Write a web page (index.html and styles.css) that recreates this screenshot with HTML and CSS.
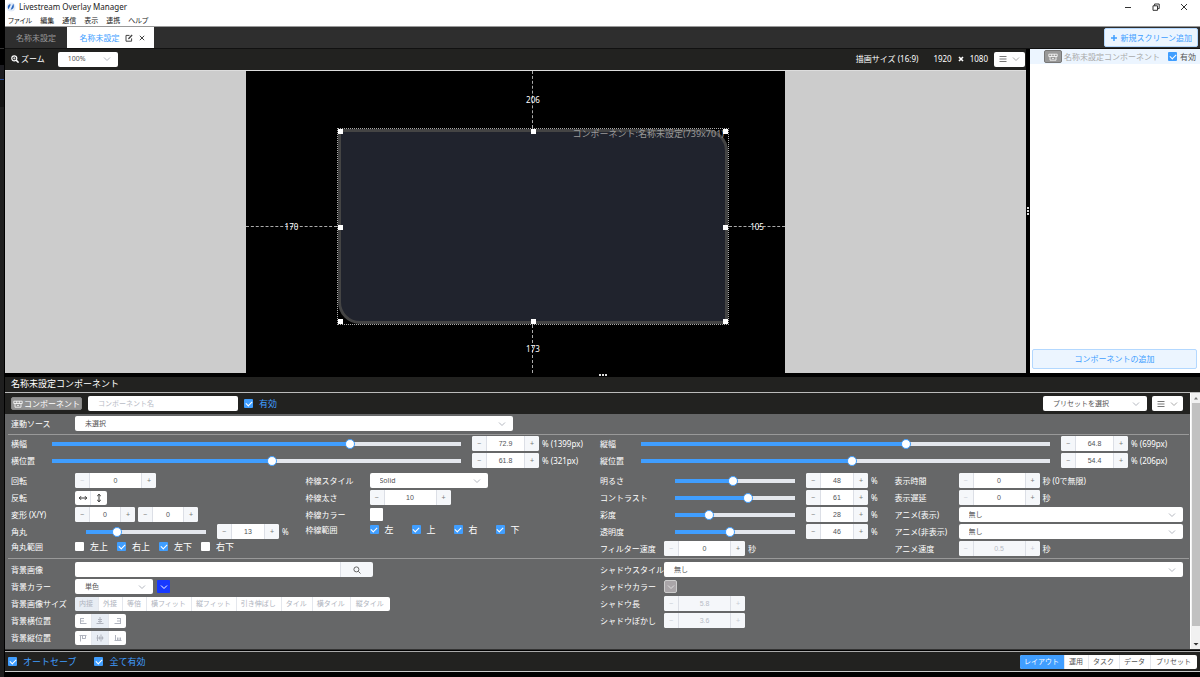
FILE: index.html
```html
<!DOCTYPE html>
<html lang="ja">
<head>
<meta charset="utf-8">
<title>Livestream Overlay Manager</title>
<link rel="stylesheet" href="styles.css">
</head>
<body>
<svg class="defs" aria-hidden="true">
  <symbol id="chev" viewBox="0 0 8 8"><path d="M1 2.5 4 5.5 7 2.5" fill="none" stroke="currentColor"/></symbol>
  <symbol id="bars" viewBox="0 0 8 8"><path d="M.5 1.5h7M.5 4h7M.5 6.5h7" fill="none" stroke="currentColor"/></symbol>
  <symbol id="box" viewBox="0 0 10 8"><path d="M.8 1.2h8.4v2.3H.8zM2 3.5v3.7h6V3.5M3.7 1.2v2.3M6.3 1.2v2.3M4 5.4h2" fill="none" stroke="currentColor" stroke-width=".8"/></symbol>
</svg>
<div class="edge"></div>
<div class="app">
  <header class="titlebar">
    <svg class="logo" viewBox="0 0 10 10"><circle cx="5" cy="5" r="4.6" fill="#e3ecf8"/><path d="M3.6 2.2C1.6 3.2 1.2 5.6 2.6 7.2L4.8 2.6zM7.2 1.8 4.6 7.8C7.4 7.6 8.8 4.4 7.2 1.8z" fill="#2a66c0"/></svg>
    <h1>Livestream Overlay Manager</h1>
    <div class="winbtns">
      <button aria-label="最小化"><svg viewBox="0 0 8 8"><path d="M1 4.5h6" stroke="#333" fill="none"/></svg></button>
      <button aria-label="元に戻す"><svg viewBox="0 0 8 8"><path d="M1 2.8h4.5v4.5H1zM2.6 2.8V1h4.6v4.6H5.5" stroke="#333" fill="none"/></svg></button>
      <button aria-label="閉じる"><svg viewBox="0 0 8 8"><path d="M1 1 7 7M7 1 1 7" stroke="#333" fill="none"/></svg></button>
    </div>
  </header>
  <nav class="menu"><a href="#">ファイル</a><a href="#">編集</a><a href="#">通信</a><a href="#">表示</a><a href="#">連携</a><a href="#">ヘルプ</a></nav>
  <div class="tabs">
    <button class="tab">名称未設定</button>
    <div class="tab active"><button>名称未設定</button>
      <button aria-label="編集"><svg class="ic" viewBox="0 0 8 8"><path d="M4.5 1.4H1v5.8h5.6V4.4" stroke="#444" fill="none"/><path d="M3 5.3 3.3 3.9 6.6.6l1 1-3.3 3.3z" fill="#444"/></svg></button>
      <button aria-label="閉じる"><svg class="ic" viewBox="0 0 8 8"><path d="M1.8 1.8 6.2 6.2M6.2 1.8 1.8 6.2" stroke="#444" fill="none"/></svg></button>
    </div>
    <button class="primary add-screen"><svg class="ic" viewBox="0 0 8 8"><path d="M4 1v6M1 4h6" stroke="currentColor" stroke-width="1.5"/></svg>新規スクリーン追加</button>
  </div>

  <main class="workspace">
    <section class="preview">
      <div class="bar">
        <svg class="ic" viewBox="0 0 8 8"><circle cx="3.3" cy="3.3" r="2.5" fill="none" stroke="#fff" stroke-width="1.2"/><path d="M5.1 5.1 7.6 7.6" stroke="#fff" stroke-width="1.5"/><path d="M2.1 3.3h2.4M3.3 2.1v2.4" stroke="#fff" stroke-width=".7"/></svg>
        <label for="zoom">ズーム</label>
        <div class="select zoom"><select id="zoom"><option>100%</option></select><svg><use href="#chev"/></svg></div>
        <span class="size">描画サイズ (16:9)</span><span>1920</span>
        <svg class="ic times" viewBox="0 0 8 8"><path d="M2 2 6 6M6 2 2 6" stroke="#fff" stroke-width="1.6"/></svg>
        <span>1080</span>
        <button class="more" aria-label="サイズメニュー"><svg><use href="#bars"/></svg><svg class="dim"><use href="#chev"/></svg></button>
      </div>
      <div class="viewport">
        <div class="stage">
          <div class="guide v top"><span>206</span></div>
          <div class="guide h left"><span>170</span></div>
          <div class="component"><div class="shape"></div><span class="caption">コンポーネント:名称未設定(739x701)</span>
            <i class="hd nw"></i><i class="hd n"></i><i class="hd ne"></i><i class="hd w"></i><i class="hd e"></i><i class="hd sw"></i><i class="hd s"></i><i class="hd se"></i></div>
          <div class="guide h right"><span>105</span></div>
          <div class="guide v bottom"><span>173</span></div>
        </div>
      </div>
    </section>
    <div class="split-v"><i></i><i></i><i></i></div>
    <aside class="list">
      <div class="item"><span class="tag"><svg><use href="#box"/></svg></span><span class="name">名称未設定コンポーネント</span><label><input type="checkbox" checked>有効</label></div>
      <button class="primary add-comp">コンポーネントの追加</button>
    </aside>
  </main>
  <div class="split-h"><i></i><i></i><i></i></div>

  <section class="props">
    <h2>名称未設定コンポーネント</h2>
    <div class="scroller">
      <div class="content">
        <div class="bar tools">
          <span class="tag"><svg><use href="#box"/></svg>コンポーネント</span>
          <input class="text cname" type="text" placeholder="コンポーネント名" aria-label="コンポーネント名">
          <label class="blue"><input type="checkbox" checked>有効</label>
          <div class="select preset"><select aria-label="プリセット"><option>プリセットを選択</option></select><svg><use href="#chev"/></svg></div>
          <button class="more" aria-label="メニュー"><svg><use href="#bars"/></svg><svg class="dim"><use href="#chev"/></svg></button>
        </div>
        <form class="form">
          <div class="group source">
            <div class="row"><label class="lb" for="src">連動ソース</label><div class="select src"><select id="src"><option>未選択</option></select><svg><use href="#chev"/></svg></div></div>
          </div>
          <div class="group sizes">
            <div class="col">
              <div class="row"><label class="lb short" for="w">横幅</label><input class="long" type="range" step="0.1" value="72.9" style="--v:72.9%" aria-label="横幅"><div class="step s66"><button type="button">−</button><input id="w" value="72.9"><button type="button">+</button></div><span>% (1399px)</span></div>
              <div class="row"><label class="lb short" for="x">横位置</label><input class="long" type="range" step="0.1" value="53.8" style="--v:53.8%" aria-label="横位置"><div class="step s66"><button type="button">−</button><input id="x" value="61.8"><button type="button">+</button></div><span>% (321px)</span></div>
            </div>
            <div class="col">
              <div class="row"><label class="lb short" for="h">縦幅</label><input class="long" type="range" step="0.1" value="64.8" style="--v:64.8%" aria-label="縦幅"><div class="step s66"><button type="button">−</button><input id="h" value="64.8"><button type="button">+</button></div><span>% (699px)</span></div>
              <div class="row"><label class="lb short" for="y">縦位置</label><input class="long" type="range" step="0.1" value="51.5" style="--v:51.5%" aria-label="縦位置"><div class="step s66"><button type="button">−</button><input id="y" value="54.4"><button type="button">+</button></div><span>% (206px)</span></div>
            </div>
          </div>
          <div class="group quad">
            <div class="col">
              <div class="row"><label class="lb" for="rot">回転</label><div class="step s81"><button type="button" disabled>−</button><input id="rot" value="0"><button type="button">+</button></div></div>
              <div class="row"><span class="lb">反転</span><div class="btns flip"><button type="button" aria-label="左右反転"><svg viewBox="0 0 8 8"><path d="M0 4h8M2 2.2.3 4 2 5.8M6 2.2 7.7 4 6 5.8" fill="none" stroke="#333"/></svg></button><button type="button" aria-label="上下反転"><svg viewBox="0 0 8 8"><path d="M4 0v8M2.2 2 4 .3 5.8 2M2.2 6 4 7.7 5.8 6" fill="none" stroke="#333"/></svg></button></div></div>
              <div class="row"><label class="lb" for="sx">変形 (X/Y)</label><div class="step s60"><button type="button">−</button><input id="sx" value="0"><button type="button">+</button></div><div class="step s60"><button type="button">−</button><input aria-label="変形 Y" value="0"><button type="button">+</button></div></div>
              <div class="row"><label class="lb" for="rad">角丸</label><input class="mid" type="range" value="26" style="--v:26%" aria-label="角丸"><div class="step s62"><button type="button">−</button><input id="rad" value="13"><button type="button">+</button></div><span>%</span></div>
              <div class="row tight"><span class="lb">角丸範囲</span><div class="checks"><label><input type="checkbox">左上</label><label><input type="checkbox" checked>右上</label><label><input type="checkbox" checked>左下</label><label><input type="checkbox">右下</label></div></div>
            </div>
            <div class="col">
              <div class="row"><label class="lb" for="bs">枠線スタイル</label><div class="select s118"><select id="bs"><option>Solid</option></select><svg><use href="#chev"/></svg></div></div>
              <div class="row"><label class="lb" for="bw">枠線太さ</label><div class="step s81"><button type="button">−</button><input id="bw" value="10"><button type="button">+</button></div></div>
              <div class="row"><span class="lb">枠線カラー</span><button type="button" class="swatch white" aria-label="枠線カラー"></button></div>
              <div class="row tight"><span class="lb">枠線範囲</span><div class="checks"><label><input type="checkbox" checked>左</label><label><input type="checkbox" checked>上</label><label><input type="checkbox" checked>右</label><label><input type="checkbox" checked>下</label></div></div>
            </div>
            <div class="col">
              <div class="row"><label class="lb" for="br">明るさ</label><input class="mid" type="range" value="48" style="--v:48%" aria-label="明るさ"><div class="step s62"><button type="button">−</button><input id="br" value="48"><button type="button">+</button></div><span>%</span></div>
              <div class="row"><label class="lb" for="co">コントラスト</label><input class="mid" type="range" value="61" style="--v:61%" aria-label="コントラスト"><div class="step s62"><button type="button">−</button><input id="co" value="61"><button type="button">+</button></div><span>%</span></div>
              <div class="row"><label class="lb" for="sa">彩度</label><input class="mid" type="range" value="28" style="--v:28%" aria-label="彩度"><div class="step s62"><button type="button">−</button><input id="sa" value="28"><button type="button">+</button></div><span>%</span></div>
              <div class="row"><label class="lb" for="op">透明度</label><input class="mid" type="range" value="46" style="--v:46%" aria-label="透明度"><div class="step s62"><button type="button">−</button><input id="op" value="46"><button type="button">+</button></div><span>%</span></div>
              <div class="row"><label class="lb" for="fs">フィルター速度</label><div class="step s81"><button type="button" disabled>−</button><input id="fs" value="0"><button type="button">+</button></div><span>秒</span></div>
            </div>
            <div class="col">
              <div class="row"><label class="lb" for="dt">表示時間</label><div class="step s81"><button type="button" disabled>−</button><input id="dt" value="0"><button type="button">+</button></div><span>秒 (0で無限)</span></div>
              <div class="row"><label class="lb" for="dd">表示遅延</label><div class="step s81"><button type="button" disabled>−</button><input id="dd" value="0"><button type="button">+</button></div><span>秒</span></div>
              <div class="row"><label class="lb" for="a1">アニメ(表示)</label><div class="select fill"><select id="a1"><option>無し</option></select><svg><use href="#chev"/></svg></div></div>
              <div class="row"><label class="lb" for="a2">アニメ(非表示)</label><div class="select fill"><select id="a2"><option>無し</option></select><svg><use href="#chev"/></svg></div></div>
              <div class="row"><label class="lb" for="as">アニメ速度</label><div class="step s81"><button type="button" disabled>−</button><input id="as" value="0.5" disabled><button type="button" disabled>+</button></div><span>秒</span></div>
            </div>
          </div>
          <div class="group last">
            <div class="col">
              <div class="row"><label class="lb" for="bg">背景画像</label><div class="file"><input id="bg" class="text" type="text"><button type="button" aria-label="参照"><svg viewBox="0 0 8 8"><circle cx="3.4" cy="3.4" r="2.5" fill="none" stroke="#666"/><path d="M5.3 5.3 7.5 7.5" stroke="#666"/></svg></button></div></div>
              <div class="row"><label class="lb" for="bc">背景カラー</label><div class="select s77"><select id="bc"><option>単色</option></select><svg><use href="#chev"/></svg></div><button type="button" class="swatch blue-sw" aria-label="背景カラー"><svg><use href="#chev"/></svg></button></div>
              <div class="row"><span class="lb">背景画像サイズ</span><div class="btns off"><button type="button" class="on" disabled>内接</button><button type="button" disabled>外接</button><button type="button" disabled>等倍</button><button type="button" disabled>横フィット</button><button type="button" disabled>縦フィット</button><button type="button" disabled>引き伸ばし</button><button type="button" disabled>タイル</button><button type="button" disabled>横タイル</button><button type="button" disabled>縦タイル</button></div></div>
              <div class="row"><span class="lb">背景横位置</span><div class="btns off icons">
                <button type="button" disabled aria-label="左"><svg viewBox="0 0 8 8"><path d="M1.5 1v6M1.5 1.5H5M1.5 4H5M1.5 6.5H7.5" fill="none" stroke="currentColor"/></svg></button><button type="button" class="on" disabled aria-label="中央"><svg viewBox="0 0 8 8"><path d="M4 0v7M2 2.5h4M2 4.5h4M.5 6.5h7" fill="none" stroke="currentColor"/></svg></button><button type="button" disabled aria-label="右"><svg viewBox="0 0 8 8"><path d="M6.5 1v6M6.5 1.5H3M6.5 4H3M6.5 6.5H.5" fill="none" stroke="currentColor"/></svg></button></div></div>
              <div class="row"><span class="lb">背景縦位置</span><div class="btns off icons">
                <button type="button" disabled aria-label="上"><svg viewBox="0 0 8 8"><path d="M.5 1.5h7M1.5 1.5v6M3.5 1.5V5M3.5 4.5h3v-3" fill="none" stroke="currentColor"/></svg></button><button type="button" class="on" disabled aria-label="中央"><svg viewBox="0 0 8 8"><path d="M.5 4h7M1.5 1v6M3.5 2.5v3M5 .5v7M6.5 2.5v3" fill="none" stroke="currentColor"/></svg></button><button type="button" disabled aria-label="下"><svg viewBox="0 0 8 8"><path d="M.5 6.5h7M1.5 6.5V1M3.5 6.5v-3M5 6.5v-3M6.5 6.5v-3" fill="none" stroke="currentColor"/></svg></button></div></div>
            </div>
            <div class="col">
              <div class="row"><label class="lb" for="ss">シャドウスタイル</label><div class="select fill"><select id="ss"><option>無し</option></select><svg><use href="#chev"/></svg></div></div>
              <div class="row"><span class="lb">シャドウカラー</span><button type="button" class="swatch grey" disabled aria-label="シャドウカラー"><svg><use href="#chev"/></svg></button></div>
              <div class="row"><label class="lb" for="sl">シャドウ長</label><div class="step s81"><button type="button" disabled>−</button><input id="sl" value="5.8" disabled><button type="button" disabled>+</button></div></div>
              <div class="row"><label class="lb" for="sb">シャドウぼかし</label><div class="step s81"><button type="button" disabled>−</button><input id="sb" value="3.6" disabled><button type="button" disabled>+</button></div></div>
            </div>
          </div>
        </form>
      </div>
      <div class="scrollbar" aria-hidden="true"><svg viewBox="0 0 8 8"><path d="M2 5.5h4L4 3z" fill="#777"/></svg><div class="thumb"></div><svg viewBox="0 0 8 8"><path d="M1.5 3h5L4 5.5z" fill="#333"/></svg></div>
    </div>
  </section>
  <footer class="status">
    <label class="blue"><input type="checkbox" checked>オートセーブ</label>
    <label class="blue"><input type="checkbox" checked>全て有効</label>
    <div class="btns modes"><button class="sel">レイアウト</button><button>運用</button><button>タスク</button><button>データ</button><button>プリセット</button></div>
  </footer>
</div>
</body>
</html>
```
FILE: styles.css
```css
* { box-sizing: border-box; }
body {
  margin: 0; display: flex; height: 100vh; overflow: hidden; background: #000; color: #fff;
  font: 8px/10px "Noto Sans", "Noto Sans CJK JP", sans-serif; white-space: nowrap;
}
button, input, select { font: inherit; color: inherit; margin: 0; padding: 0; border: 0; background: none; min-width: 0; }
button { display: flex; align-items: center; justify-content: center; }
h1, h2 { margin: 0; font: inherit; }
a { color: inherit; text-decoration: none; }
svg { width: 8px; height: 8px; flex: none; display: block; }
.defs { position: absolute; width: 0; height: 0; }
.edge { flex: 0 0 5px; background: linear-gradient(#000 48px, #333 48px 49px, #000 49px 65px, #1c1c20 65px 79px, #2b4a90 79px 80px, #141414 80px 107px, #1f1f1f 107px); border-right: 1px solid #000; }
.app { flex: 1; min-width: 0; display: flex; flex-direction: column; padding-bottom: 5px; }

.titlebar { height: 14px; background: #fff; color: #222; display: flex; align-items: center; padding: 0 12px 0 1px; gap: 3px; }
.logo { width: 10px; height: 10px; }
.winbtns { margin-left: auto; display: flex; gap: 20px; }
.menu { height: 13px; background: #fff; color: #222; display: flex; align-items: center; gap: 8px; padding: 1px 0 0 3px; border-bottom: 1px solid #999; font-size: 7px; }
.menu a { font-feature-settings: "palt"; }
.tabs { height: 22px; background: #2e2e2e; display: flex; align-items: stretch; padding: 0 2px 0 0; border-bottom: 1px solid #111; }
.tab { width: 62px; color: #999; }
.tab.active { width: 87px; display: flex; align-items: center; justify-content: center; gap: 5px; background: #fff; color: #409eff; padding-left: 4px; }
.primary { background: #ecf5ff; color: #409eff; border: 1px solid #b3d8ff; border-radius: 2px; }
.add-screen { margin: 1px 0 1px auto; padding: 0 5px; gap: 2px; }

.workspace { flex: 1; min-height: 0; display: flex; }
.preview { flex: 1; display: flex; flex-direction: column; min-width: 0; }
.bar { height: 21px; flex: none; background: #222220; display: flex; align-items: center; padding: 0 1px 0 6px; }
.preview .bar { padding-bottom: 1px; }
.bar label { margin-left: 2px; }
.select { display: grid; align-items: center; height: 15px; color: #555; font-size: 7px; }
.select > * { grid-area: 1 / 1; }
.select select { appearance: none; width: 100%; height: 15px; background: #fff; border-radius: 2px; padding: 0 20px 0 10px; }
.select svg { justify-self: end; margin-right: 7px; color: #b4b8c0; pointer-events: none; }
.zoom { width: 60px; margin-left: 13px; }
.size { margin: 0 15px 0 auto; }
.times { margin: 0 5px; }
.more { width: 31px; height: 15px; margin-left: 6px; gap: 5px; background: #fff; border-radius: 2px; color: #777; }
.more .dim { color: #aaa; }
.viewport { flex: 1; min-height: 0; display: flex; justify-content: center; background: #ccc; border-top: 1px solid #ddd; }
.stage { width: 52.8%; background: #000; display: grid; grid-template-columns: 91fr 392fr 56fr; grid-template-rows: 57fr 197fr 48fr; }
.guide { display: grid; place-items: center; color: #fff; font-size: 8px; min-height: 0; min-width: 0; }
.guide::before { content: ""; grid-area: 1 / 1; }
.guide span { grid-area: 1 / 1; }
.guide.v::before { height: 100%; border-left: 1px dashed #aaa; }
.guide.h::before { width: 100%; border-top: 1px dashed #aaa; }
.top { grid-area: 1 / 2; }
.left { grid-area: 2 / 1; }
.right { grid-area: 2 / 3; }
.bottom { grid-area: 3 / 2; }
.component { grid-area: 2 / 2; position: relative; border: 1px dotted #aaa; }
.shape { height: 100%; background: #20232d; border: 3px solid #444; border-radius: 0 22px 0 22px; }
.caption { position: absolute; right: 4px; top: 0; color: #999; font-size: 9px; }
.hd { position: absolute; width: 5px; height: 5px; background: #fff; }
.nw, .n, .ne { top: 0; }
.sw, .s, .se { bottom: 0; }
.nw, .w, .sw { left: 0; }
.ne, .e, .se { right: 0; }
.w, .e { top: calc(50% - 2px); }
.n, .s { left: calc(50% - 2px); }
.split-v { width: 4px; background: #000; display: flex; flex-direction: column; align-items: center; justify-content: center; gap: 1px; }
.split-v i, .split-h i { width: 2px; height: 2px; background: #ddd; }
.split-h { height: 4px; flex: none; display: flex; align-items: center; justify-content: center; gap: 1px; }
.list { width: 170px; background: #fff; display: flex; flex-direction: column; justify-content: space-between; }
.item { height: 15px; background: #ecf5ff; display: flex; align-items: center; padding: 0 4px 0 14px; gap: 2px; }
.item .name { color: #aaa; }
.item label { margin-left: auto; display: flex; gap: 3px; align-items: center; color: #555; }
.tag { display: flex; align-items: center; justify-content: center; gap: 1px; height: 13px; padding: 0 3px; background: #999; border: 1px solid #777; border-radius: 2px; color: #fff; }
.tag svg { width: 10px; }
.add-comp { height: 20px; margin: 0 3px 4px 2px; }

.props { flex: none; display: flex; flex-direction: column; }
.props h2 { height: 16px; padding-left: 6px; background: #222220; border-bottom: 1px solid #bbb; font-size: 9px; line-height: 14px; }
.scroller { display: flex; border-bottom: 1px solid #333; }
.content { flex: 1; min-width: 0; }
.tools { padding-right: 7px; }
.tools .tag { border-color: #888; background: #929292; padding: 0 1px; }
.text { height: 15px; background: #fff; border-radius: 2px; padding: 0 10px; font-size: 7px; color: #555; }
.text::placeholder { color: #b8bcc6; }
.cname { width: 150px; margin-left: 6px; }
.blue { display: flex; align-items: center; gap: 6px; color: #409eff; font-size: 9px; }
.bar .blue { margin-left: 6px; }
.preset { width: 104px; margin-left: auto; }
.tools .more { margin-left: 5px; }
.form { background: #666768; padding: 0 1px 3px 3px; }
.group { display: grid; grid-template-columns: 1fr 1fr; padding-left: 3px; border-bottom: 1px solid #999; }
.source { padding-top: 1px; padding-bottom: 2px; }
.sizes { border: 0; padding-bottom: 3px; }
.quad { grid-template-columns: 1fr 1fr 1fr 1fr; padding-bottom: 1px; }
.last { border: 0; padding-top: 2px; }
.row { height: 17px; display: flex; align-items: center; }
.tight { height: 13px; }
.row > span:last-child { margin-left: 3px; }
.sizes .row > span:last-child { flex: 0 0 58px; }
.lb { flex: 0 0 64px; }
.lb.short { flex-basis: 41px; }
.src { width: 438px; }
.fill { flex: 1; margin-right: 6px; }
.s118 { width: 118px; }
.s77 { width: 78px; }
input[type="range"] {
  appearance: none; height: 15px;
  background: linear-gradient(90deg, #409eff var(--v), #e4e7ed var(--v)) center / calc(100% - 10px) 4px no-repeat;
}
.long { flex: 1; margin: 0 6px 0 -5px !important; }
.mid { width: 130px; margin: 0 6px !important; }
input[type="range"]::-webkit-slider-thumb { appearance: none; width: 10px; height: 10px; border-radius: 50%; background: #fff; border: 1px solid #409eff; }
.step { display: grid; grid-template-columns: 15px 1fr 15px; height: 15px; flex: none; background: #fff; border-radius: 2px; overflow: hidden; color: #505256; font: 7px/15px "Liberation Sans", sans-serif; }
.step input { text-align: center; width: 100%; }
.step button { background: #f5f7fa; color: #777; border-right: 1px solid #dcdfe6; }
.step button:last-child { border-right: 0; border-left: 1px solid #dcdfe6; }
.step button:disabled { color: #c8ccd4; }
.step input:disabled { background: #f5f7fa; color: #b8bcc6; }
.s60 { width: 60px; }
.s60 + .s60 { margin-left: 3px; }
.s62 { width: 62px; }
.s66 { width: 67px; }
.s81 { width: 81px; }
input[type="checkbox"] { appearance: none; width: 9px; height: 9px; background: #fff; border-radius: 1px; display: grid; place-items: center; flex: none; }
input[type="checkbox"]:checked { background: #409eff; }
input[type="checkbox"]:checked::after { content: ""; width: 3px; height: 5px; margin-bottom: 2px; border: solid #fff; border-width: 0 1px 1px 0; transform: rotate(45deg); }
.checks { display: flex; font-size: 9px; }
.checks label { width: 42px; display: flex; align-items: center; gap: 6px; }
.btns { display: flex; height: 14px; background: #fff; border-radius: 2px; overflow: hidden; color: #555; font-size: 7px; }
.btns button { padding: 0 5px 0 4px; border-right: 1px solid #e4e7ed; }
.btns button:last-child { border-right: 0; padding: 0 6px 0 5px; }
.btns.flip button { width: 16px; padding: 0; }
.off { color: #b0b4be; }
.off .on { background: #e8edf4; }
.btns.icons button { width: 17px; padding: 0; }
.swatch { width: 13px; height: 13px; border-radius: 1px; }
.white { background: #fff; }
.blue-sw { margin-left: 4px; background: #1739ff; color: #fff; }
.grey { background: #a9a5a8; border: 1px solid #ccc; color: #ddd; border-radius: 2px; }
.file { display: flex; width: 298px; }
.file .text { flex: 1; border-radius: 2px 0 0 2px; }
.file button { width: 33px; background: #f5f7fa; border-left: 1px solid #dcdfe6; border-radius: 0 2px 2px 0; }
.scrollbar { width: 10px; background: #f1f1f1; border-left: 1px solid #fff; display: flex; flex-direction: column; align-items: center; justify-content: space-between; padding: 1px 0; }
.thumb { flex: 1; width: 8px; margin: 1px 0 14px; background: #c1c1c1; }
.status { height: 21px; margin-top: 1px; background: #222220; border-top: 1px solid #aaa; border-bottom: 1px solid #ccc; display: flex; align-items: center; gap: 18px; padding: 0 3px; }
.status .modes { margin-left: auto; }
.modes .sel { background: #409eff; color: #fff; }
```
